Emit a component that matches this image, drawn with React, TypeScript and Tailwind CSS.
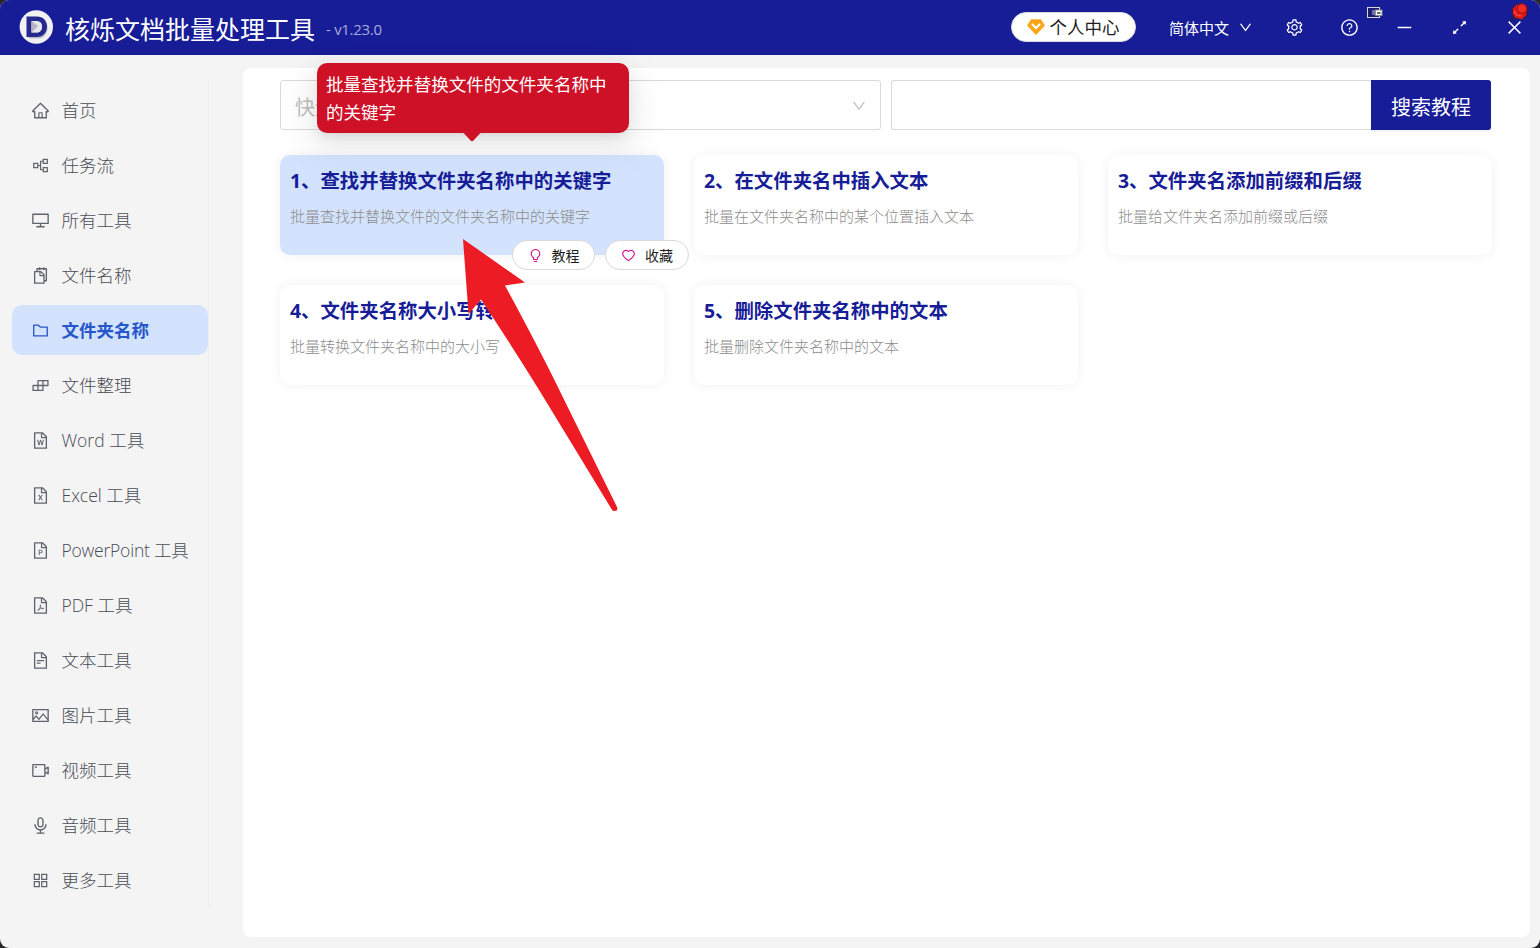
import {
  AiOutlineAppstore,
  AiOutlineArrowsAlt,
  AiOutlineAudio,
  AiOutlineBuild,
  AiOutlineBulb,
  AiOutlineClose,
  AiOutlineDesktop,
  AiOutlineDown,
  AiOutlineFileExcel,
  AiOutlineFilePdf,
  AiOutlineFilePpt,
  AiOutlineFileText,
  AiOutlineFileWord,
  AiOutlineFolder,
  AiOutlineHeart,
  AiOutlineHome,
  AiOutlineMinus,
  AiOutlinePartition,
  AiOutlinePicture,
  AiOutlineQuestionCircle,
  AiOutlineSetting,
  AiOutlineSnippets,
  AiOutlineVideoCamera,
} from "react-icons/ai";
import type { IconType } from "react-icons";
import clsx from "clsx";

interface MenuItem {
  icon: IconType
  text: string
  active?: boolean
  tight?: boolean
}

const menu: MenuItem[] = [
  { icon: AiOutlineHome, text: '首页' },
  { icon: AiOutlinePartition, text: '任务流' },
  { icon: AiOutlineDesktop, text: '所有工具' },
  { icon: AiOutlineSnippets, text: '文件名称' },
  { icon: AiOutlineFolder, text: '文件夹名称', active: true },
  { icon: AiOutlineBuild, text: '文件整理' },
  { icon: AiOutlineFileWord, text: 'Word 工具' },
  { icon: AiOutlineFileExcel, text: 'Excel 工具' },
  { icon: AiOutlineFilePpt, text: 'PowerPoint 工具', tight: true },
  { icon: AiOutlineFilePdf, text: 'PDF 工具' },
  { icon: AiOutlineFileText, text: '文本工具' },
  { icon: AiOutlinePicture, text: '图片工具' },
  { icon: AiOutlineVideoCamera, text: '视频工具' },
  { icon: AiOutlineAudio, text: '音频工具' },
  { icon: AiOutlineAppstore, text: '更多工具' },
]

const tools = [
  { title: '查找并替换文件夹名称中的关键字', desc: '批量查找并替换文件的文件夹名称中的关键字' },
  { title: '在文件夹名中插入文本', desc: '批量在文件夹名称中的某个位置插入文本' },
  { title: '文件夹名添加前缀和后缀', desc: '批量给文件夹名添加前缀或后缀' },
  { title: '文件夹名称大小写转换', desc: '批量转换文件夹名称中的大小写' },
  { title: '删除文件夹名称中的文本', desc: '批量删除文件夹名称中的文本' },
]

const Logo = () => (
  <svg className="w-[34px] h-[34px] -mt-px" viewBox="0 0 34 34">
    <circle cx="17.300" cy="17" r="16.7" fill="#f1f1f3" />
    <path d="M10 9h9c5.500 0 9.500 3.500 9.500 9s-4 10.500-9.500 10.500h-9z" fill="#8b8d9c" opacity=".55" />
    <path fillRule="evenodd" d="M7.500 6.500H18c6 0 10 4 10 10s-4 10.500-10 10.500H7.500zM12.500 11v11.500H17c4 0 6-2.300 6-5.800S21 11 17 11z" fill="#25298f" />
    <path d="M12.500 11H17c4 0 6 2.200 6 5.700s-2 5.800-6 5.800h-4.500z" fill="#e6e6ec" />
    <path d="M12.500 11v11.500L19 16z" fill="#9fa1b2" opacity=".7" />
  </svg>
)

const Diamond = () => (
  <svg className="w-[18px] h-[16px]" viewBox="0 0 18 16">
    <path d="M4.500 1h9L17 6.500 9 15 1 6.500z" fill="#faa61a" stroke="#faa61a" strokeWidth="1.500" strokeLinejoin="round" />
    <path d="M5.500 5.500L9 9l3.500-3.500" fill="none" stroke="#fff" strokeWidth="2" strokeLinecap="round" />
  </svg>
)

const TrayIcon = () => (
  <svg className="absolute left-[1366px] top-[6px] w-[18px] h-[14px]" viewBox="0 0 18 14">
    <rect x="1.500" y="1.500" width="12" height="10" fill="#1b1c70" stroke="#d8d8d8" />
    <path d="M6 4h3v5H6z" fill="#6d6fae" />
    <rect x="9.500" y="4" width="6.500" height="5.500" fill="#fff" stroke="#8c8c94" />
    <path d="M11 6h3.500v2H11z" fill="#66666e" />
  </svg>
)

const Pin = () => (
  <svg className="absolute left-[1509px] top-[2px] w-[21px] h-[21px]" viewBox="0 0 21 21">
    <path d="M6 14l-4 5" stroke="#26262b" strokeWidth="1.800" />
    <path d="M3.500 6.500l4-4 6-.8 5 4-1 8-5 4-7-2-2-4z" fill="#e0161c" stroke="#4a1a30" strokeWidth="1" />
    <circle cx="13" cy="6.500" r="4.700" fill="#f32a22" stroke="#8d1018" strokeWidth=".8" />
    <path d="M5.500 9c0 3 3 5.500 7 4.500" fill="none" stroke="#ff4a3a" strokeWidth="1.500" />
  </svg>
)

const Header = () => (
  <header className="h-[55px] bg-[#171c97] text-white flex items-center shrink-0">
    <div className="pl-[19px] flex items-center">
      <Logo />
      <h1 className="ml-[12px] text-[25px] leading-[30px] mt-[2px]">核烁文档批量处理工具</h1>
      <span className="ml-[11px] mt-[3px] text-[15px] tracking-[-0.3px] text-[#a9abda]">- v1.23.0</span>
    </div>
    <div className="ml-auto flex items-center">
      <button className="-mt-px w-[125px] h-[30px] rounded-full bg-white border border-[#d9d9d9] text-[#1f1f1f] flex items-center justify-center gap-1 text-[17.5px] leading-none">
        <Diamond />
        <span className="mt-px">个人中心</span>
      </button>
      <div className="ml-[33px] flex items-center gap-[9px] text-[15px]">
        <span className="mt-px">简体中文</span>
        <AiOutlineDown className="text-[15px]" />
      </div>
      <div className="ml-[14px] -mr-[2px] flex text-[19px]">
        {[AiOutlineSetting, AiOutlineQuestionCircle, AiOutlineMinus, AiOutlineArrowsAlt, AiOutlineClose].map((Icon, i) => (
          <span key={i} className="w-[55px] h-[55px] flex items-center justify-center">
            <Icon />
          </span>
        ))}
      </div>
    </div>
  </header>
)

const Sidebar = () => (
  <aside className="w-[209px] h-[828px] mt-6 border-r border-[#ededed] pl-3 flex flex-col gap-[5px] pt-[6px]">
    {menu.map(({ icon: Icon, text, active, tight }) => (
      <div
        key={text}
        className={clsx(
          'h-[50px] shrink-0 rounded-[10px] pl-[19px] flex items-center gap-[11.5px] text-[17.5px]',
          active ? 'bg-[#d3e3fd] text-[#2556cb] font-bold' : 'text-[#484c54] font-light',
          tight && 'tracking-[-0.2px]',
        )}
      >
        <Icon className={clsx('text-[19px] shrink-0 mt-px', !active && 'text-[#5f636b]')} />
        <span className="whitespace-nowrap">{text}</span>
      </div>
    ))}
  </aside>
)

const Tooltip = () => (
  <div className="absolute left-[317px] top-[63px] w-[312px] h-[70px] rounded-[10px] bg-[#ce1126] text-white text-[17.55px] leading-7 pl-[9px] pr-[20px] pt-[7px] shadow-[0_8px_20px_rgba(0,0,0,0.08),0_4px_8px_-5px_rgba(0,0,0,0.12),0_11px_35px_10px_rgba(0,0,0,0.05)]">
    批量查找并替换文件的文件夹名称中的关键字
    <svg className="absolute left-[144px] top-[69px] w-[22px] h-[10px]" viewBox="0 0 22 10">
      <path d="M0 0h22c-2 0-2.500 1-3.500 2L12.500 8.500q-1.500 1.200-3 0L3.500 2C2.500 1 2 0 0 0z" fill="#ce1126" />
    </svg>
  </div>
)

const PointerArrow = () => (
  <svg className="absolute left-[460px] top-[236px] w-[160px] h-[278px]" viewBox="460 236 160 278">
    <path d="M463 239L525 282.500L505 285.500Q540 350 563.500 398.500L617 507Q618.500 511.500 614 511Q612.500 511 611.500 509L540 391.500Q510 343 481 299.500L468.500 314Z" fill="#ed1c24" />
  </svg>
)

const pill = 'h-[30px] rounded-full border border-[#d9d9d9] bg-white text-[#1f1f1f] text-[14px] flex items-center justify-center gap-[9px]'

const App: React.FC = () => {
  return (
    <div className="w-[1540px] h-[948px] bg-[#26272b] overflow-hidden font-['Open_Sans','Noto_Sans_CJK_SC',sans-serif]">
      <div className="relative w-full h-full bg-[#f4f4f4] rounded-[9px] overflow-hidden flex flex-col">
        <Header />
        <div className="flex flex-1">
          <Sidebar />
          <main className="ml-[34px] mt-[13px] w-[1287px] h-[869px] rounded-[8px] bg-white pl-[37px] pt-3">
            <div className="flex w-[1211px] h-[50px]">
              <div className="w-[601px] border border-[#d9d9d9] rounded-[3px] flex items-center justify-between pl-[14px] pr-[13px]">
                <span className="text-[20px] text-[#bfbfbf] mt-[6px]">快速</span>
                <AiOutlineDown className="text-[16px] text-[#bfbfbf] mt-px" />
              </div>
              <div className="ml-[10px] flex-1 border border-r-0 border-[#d9d9d9] rounded-l-[3px]" />
              <button className="w-[120px] bg-[#171c97] text-white text-[20px] rounded-r-[3px] pt-[5px] shadow-[0_2px_0_rgba(0,0,0,0.04)]">搜索教程</button>
            </div>
            <div className="mt-[25px] w-[1212px] grid grid-cols-3 gap-[30px]">
              {tools.map((tool, i) => (
                <div
                  key={tool.title}
                  className={clsx(
                    'relative h-[100px] rounded-[10px] pl-[10px] pt-[10px] shadow-[0_0_12px_rgba(0,0,0,0.06)]',
                    i === 0 ? 'bg-[#d3e3fd]' : 'bg-white',
                  )}
                >
                  <h2 className="text-[19.4px] leading-[32px] font-bold text-[#171c97]">{i + 1}、{tool.title}</h2>
                  <p className="mt-[8px] text-[15px] leading-[22px] font-light text-[#8c8c8c]">{tool.desc}</p>
                  {i === 0 && (
                    <div className="absolute left-[232px] top-[85px] z-10 flex gap-[10px]">
                      <button className={clsx(pill, 'w-[83px]')}>
                        <AiOutlineBulb className="text-[15px] text-[#d0108c]" />
                        教程
                      </button>
                      <button className={clsx(pill, 'w-[84px]')}>
                        <AiOutlineHeart className="text-[15px] text-[#d0108c]" />
                        收藏
                      </button>
                    </div>
                  )}
                </div>
              ))}
            </div>
          </main>
        </div>
        <Tooltip />
        <PointerArrow />
        <TrayIcon />
        <Pin />
      </div>
    </div>
  );
}

export default App;
